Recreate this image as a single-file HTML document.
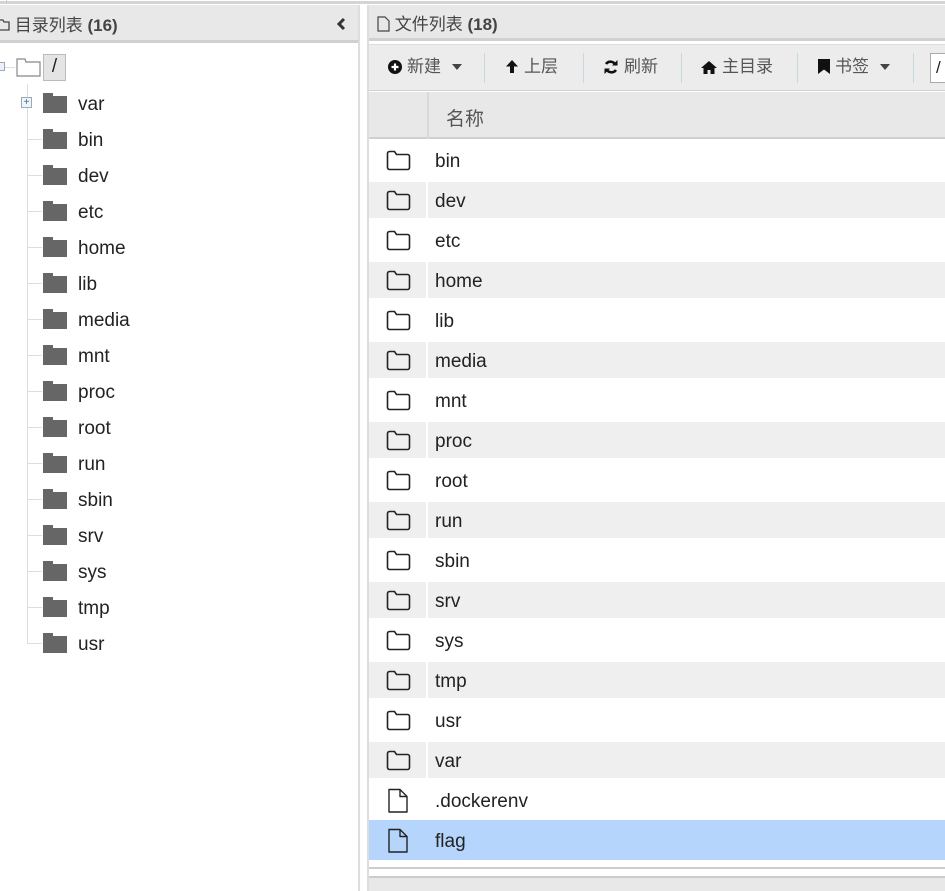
<!DOCTYPE html>
<html><head><meta charset="utf-8"><style>
*{margin:0;padding:0;box-sizing:border-box}
body{width:945px;height:891px;overflow:hidden;background:#fff;font-family:"Liberation Sans","Noto Sans CJK SC",sans-serif;position:relative;color:#222}
.abs{position:absolute}
.hdr{background:#e8e8e8;font-size:17px;color:#333}
.tn{position:absolute;left:78px;font-size:19px;color:#222}
.tf{position:absolute;left:43px;width:24px;height:17px;background:#666}
.tf:before{content:"";position:absolute;left:0;top:-3px;width:10px;height:4px;background:#666}
.hl{position:absolute;left:28px;width:14px;height:1px;background:#ddd}
.row{position:absolute;left:369px;width:576px;height:40px}
.row .g{position:absolute;left:0;top:2px;width:57px;height:36px}
.row .g2{position:absolute;left:59px;top:2px;right:0;height:36px}
.row.s .g,.row.s .g2{background:#efefef}
.row.sel .g,.row.sel .g2{background:#b5d5fc;left:0;width:auto;right:0;top:0;height:40px}
.row .t{position:absolute;left:66px;top:11px;font-size:19px;color:#222}
.row svg{position:absolute;left:17px;top:8px}
.tb{position:absolute;top:52px;font-size:17px;color:#555;white-space:nowrap}
.tb svg{vertical-align:-2px;margin-right:5px}
.sep{position:absolute;top:53px;width:1px;height:30px;background:#c8d8e0}
</style></head><body>
<div class="abs" style="left:0;top:0;width:945px;height:4px;background:#fff;border-bottom:3px solid #d4d4d4"></div>
<div class="abs" style="left:0;top:0;width:7px;height:4px;border-right:1px solid #ccc"></div>
<!-- left panel -->
<div class="abs hdr" style="left:0;top:5px;width:358px;height:38px;border-bottom:3px solid #d0d0d0"></div>
<div class="abs" style="left:-2px;top:11px;font-size:17px;color:#444">
<svg width="12" height="14" style="vertical-align:-1px" viewBox="0 0 12 14"><path d="M0 2h5l1 2h5v8H0" fill="none" stroke="#444" stroke-width="1.3"/></svg> 目录列表 <b>(16)</b></div>
<svg class="abs" style="left:336px;top:17px" width="10" height="14"><path d="M8 2L3 7l5 5" fill="none" stroke="#333" stroke-width="3"/></svg>
<div class="abs" style="left:358px;top:5px;width:2px;height:886px;background:#ddd"></div>
<div class="abs" style="left:367px;top:5px;width:2px;height:886px;background:#ddd"></div>
<!-- tree -->
<div class="abs" style="left:-4px;top:62px;width:9px;height:9px;border:1px solid #9ab;background:#eef"></div>
<div class="abs" style="left:5px;top:67px;width:10px;height:1px;background:#ddd"></div>
<svg class="abs" style="left:16px;top:57px" width="25" height="20"><path d="M1 2h8l1 3h14v14H1z" fill="#fff" stroke="#888" stroke-width="1.2"/></svg>
<div class="abs" style="left:43px;top:54px;width:23px;height:27px;background:#e4e4e4;border:1px solid #bbb;font-size:19px;text-align:center;line-height:24px">/</div>
<div class="abs" style="left:27px;top:84px;width:1px;height:560px;background:#ddd"></div>
<div class="abs" style="left:21px;top:97px;width:11px;height:11px;border:1px solid #9ab;background:#eef4fa;font-size:10px;line-height:9px;text-align:center;color:#468">+</div>
<div id="tree"></div>
<!-- right panel -->
<div class="abs hdr" style="left:369px;top:5px;width:576px;height:36px;border-bottom:3px solid #d0d0d0"></div>
<div class="abs" style="left:377px;top:10px;font-size:17px;color:#444">
<svg width="13" height="16" style="vertical-align:-2px" viewBox="0 0 13 16"><path d="M1 1h7l4 4v10H1z" fill="none" stroke="#444" stroke-width="1.2"/></svg> 文件列表 <b>(18)</b></div>
<div class="abs" style="left:369px;top:44px;width:576px;height:47px;background:#ececec;border-top:1px solid #ddd;border-bottom:1px solid #d0d0d0"></div>
<div class="tb" style="left:388px"><svg width="14" height="14"><circle cx="7" cy="7" r="7" fill="#111"/><path d="M7 3.5v7M3.5 7h7" stroke="#fff" stroke-width="2.2"/></svg>新建 <svg width="10" height="6" style="margin-left:6px;vertical-align:2px"><path d="M0 0h10L5 6z" fill="#444"/></svg></div>
<div class="sep" style="left:484px"></div>
<div class="tb" style="left:505px"><svg width="14" height="15"><path d="M7 1L1 7.5h4V14h4V7.5h4z" fill="#111"/></svg>上层</div>
<div class="sep" style="left:583px"></div>
<div class="tb" style="left:603px"><svg width="16" height="14"><path d="M12.5 5A5.5 5.5 0 0 0 3 4M3.5 9A5.5 5.5 0 0 0 13 10" fill="none" stroke="#111" stroke-width="2.6"/><path d="M9 5.5h5.5V0zM7 8.5H1.5V14z" fill="#111"/></svg>刷新</div>
<div class="sep" style="left:681px"></div>
<div class="tb" style="left:701px"><svg width="16" height="13"><path d="M8 0L0 7h2.5v6h4V9h3v4h4V7H16z" fill="#111"/></svg>主目录</div>
<div class="sep" style="left:797px"></div>
<div class="tb" style="left:818px"><svg width="12" height="15"><path d="M0 0h12v15L6 10.5 0 15z" fill="#111"/></svg>书签 <svg width="10" height="6" style="margin-left:6px;vertical-align:2px"><path d="M0 0h10L5 6z" fill="#444"/></svg></div>
<div class="sep" style="left:913px"></div>
<div class="abs" style="left:930px;top:53px;width:20px;height:30px;background:#fff;border:1px solid #aaa;font-size:17px;padding:4px 0 0 5px">/</div>
<div class="abs" style="left:369px;top:92px;width:576px;height:47px;background:#e8e8e8;border-bottom:2px solid #d0d0d0"></div>
<div class="abs" style="left:427px;top:92px;width:2px;height:47px;background:#d8d8d8"></div>
<div class="abs" style="left:446px;top:104px;font-size:19px;color:#555">名称</div>
<div id="rows"></div>
<div class="abs" style="left:369px;top:860px;width:576px;height:9px;border-bottom:2px solid #ccc"></div>
<div class="abs" style="left:369px;top:876px;width:576px;height:15px;background:#e8e8e8;border-top:2px solid #ccc"></div>
<script>
var t=["var","bin","dev","etc","home","lib","media","mnt","proc","root","run","sbin","srv","sys","tmp","usr"],h="";
t.forEach(function(n,i){var y=103+36*i;h+='<div class="tf" style="top:'+(y-7)+'px"></div><div class="tn" style="top:'+(y-9)+'px">'+n+'</div>'+(i?'<div class="hl" style="top:'+y+'px"></div>':'')});
document.getElementById('tree').innerHTML=h;
var f=["bin","dev","etc","home","lib","media","mnt","proc","root","run","sbin","srv","sys","tmp","usr","var",".dockerenv","flag"],r="";
var fold='<svg width="26" height="24"><path d="M1.5 5.5a2 2 0 0 1 2-2h5l2 3h11a2 2 0 0 1 2 2v11a2 2 0 0 1-2 2h-18a2 2 0 0 1-2-2z" fill="none" stroke="#222" stroke-width="1.6"/></svg>';
var file='<svg width="26" height="26"><path d="M3 1.5h11l7 7v15.5H3z M14 1.5v7h7" fill="none" stroke="#222" stroke-width="1.4" stroke-linejoin="round"/></svg>';
f.forEach(function(n,i){var c=i==17?"sel":(i%2?"s":"");r+='<div class="row '+c+'" style="top:'+(140+40*i)+'px"><div class="g"></div><div class="g2"></div>'+(i>15?file:fold)+'<div class="t">'+n+'</div></div>'});
document.getElementById('rows').innerHTML=r;
</script>
</body></html>
